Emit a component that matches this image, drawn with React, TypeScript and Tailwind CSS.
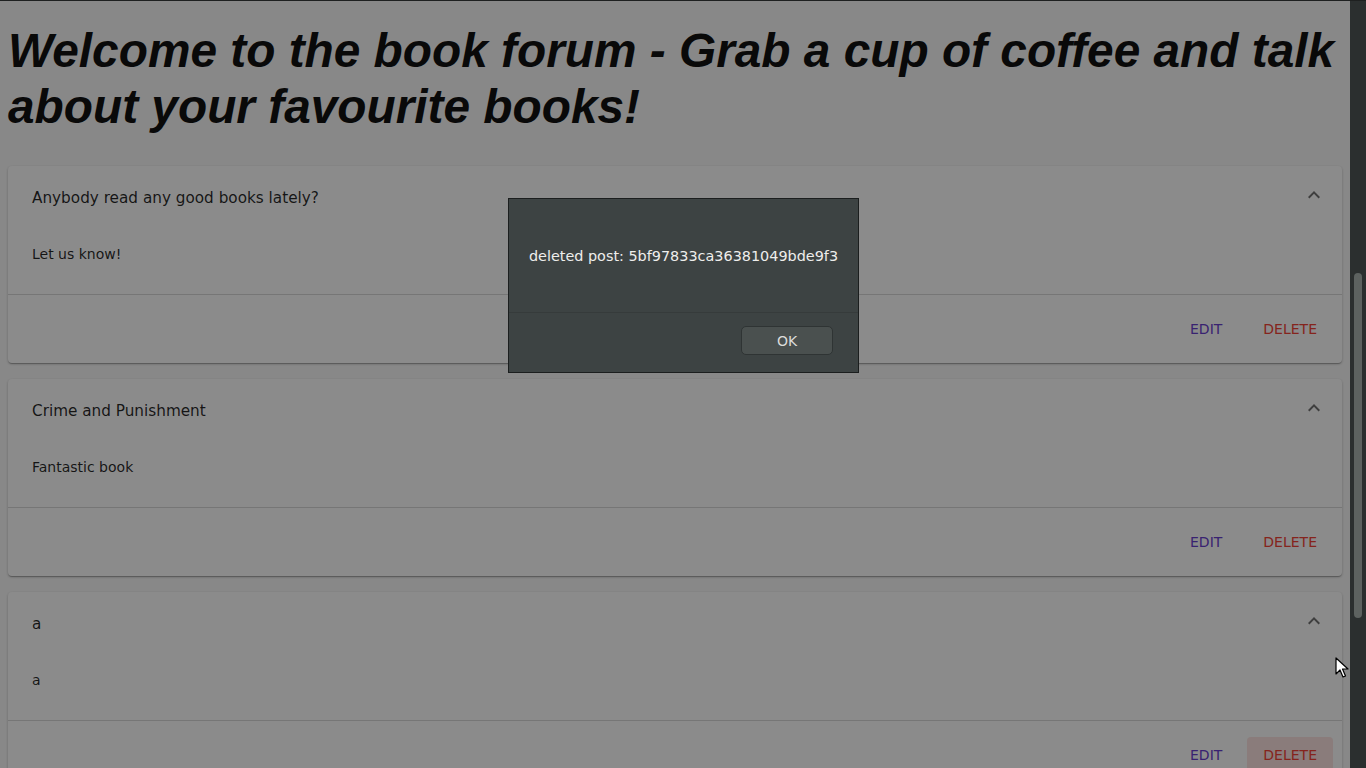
import React from "react";

type Post = {
  id: string;
  title: string;
  body: string;
  hoverDelete?: boolean;
};

const posts: Post[] = [
  { id: "1", title: "Anybody read any good books lately?", body: "Let us know!" },
  { id: "2", title: "Crime and Punishment", body: "Fantastic book" },
  { id: "3", title: "a", body: "a", hoverDelete: true },
];

function ChevronUp() {
  return (
    <svg viewBox="0 0 24 24" className="h-6 w-6 fill-black/55" aria-hidden="true">
      <path d="M7.41 15.41L12 10.83l4.59 4.58L18 14l-6-6-6 6z" />
    </svg>
  );
}

function PostCard({ post }: { post: Post }) {
  return (
    <div className="rounded bg-white shadow-[0_1px_3px_rgba(0,0,0,0.2),0_1px_1px_rgba(0,0,0,0.14),0_2px_1px_-1px_rgba(0,0,0,0.12)]">
      <div className="flex h-16 items-center pl-6 pr-4">
        <p className="flex-1 text-[15.25px] text-black/85">{post.title}</p>
        <div className="-mt-[7px]">
          <ChevronUp />
        </div>
      </div>
      <div className="px-6 pt-[14px] pb-[30px] text-sm leading-5 text-black/85">{post.body}</div>
      <div className="h-px bg-black/15" />
      <div className="flex justify-end gap-[9px] py-4 pl-4 pr-[9px]">
        <button className="h-9 min-w-16 rounded px-4 text-sm text-[#6a3fd0]">EDIT</button>
        <button
          className={
            post.hoverDelete
              ? "h-9 rounded bg-[#f44336]/15 px-4 text-sm text-[#f44336]"
              : "h-9 rounded px-4 text-sm text-[#f44336]"
          }
        >
          DELETE
        </button>
      </div>
    </div>
  );
}

function Cursor() {
  return (
    <svg width="14" height="22" viewBox="0 0 14 22" className="absolute left-[1335px] top-[657px]">
      <path d="M1 1 L1 17 L5 13 L8 20 L10.5 19 L7.5 12 L13 12 Z" fill="#fff" stroke="#000" strokeWidth="1.2" strokeLinejoin="round" />
    </svg>
  );
}

export default function App() {
  return (
    <div className="relative flex h-screen flex-col overflow-hidden font-['DejaVu_Sans',sans-serif]">
      <div className="h-px bg-[#1e2020]" />
      <div className="flex min-h-0 flex-1">
        <div className="relative flex-1 overflow-hidden bg-[#fafafa] px-2">
          <h1 className="mt-[22px] mb-[31px] font-['Liberation_Sans',Arial,sans-serif] text-[47.8px] leading-[56px] font-bold italic text-[#111]">
            Welcome to the book forum - Grab a cup of coffee and talk about your favourite books!
          </h1>
          <div className="flex flex-col gap-4">
            {posts.map((p) => (
              <PostCard key={p.id} post={p} />
            ))}
          </div>
          <div className="absolute inset-0 bg-black/[0.455]" />
        </div>
        <div className="w-4 bg-[#2b2f2f] pt-[272px] pl-1">
          <div className="h-[345px] w-2 rounded-full bg-[#5d6260]" />
        </div>
      </div>

      <div className="absolute left-[508px] top-[198px] flex w-[351px] flex-col border border-[#1b1e1e] bg-[#3d4343]">
        <div className="flex h-[113px] items-center justify-center pt-[3px] text-[14.4px] text-[#eeeeec]">
          deleted post: 5bf97833ca36381049bde9f3
        </div>
        <div className="h-px bg-[#363b3b]" />
        <div className="flex justify-end pt-[13px] pr-[25px] pb-[17px]">
          <button className="h-[29px] w-[92px] rounded-[5px] border border-[#2f3434] bg-[#4a504f] text-sm text-[#dcdcda]">
            OK
          </button>
        </div>
      </div>

      <Cursor />
    </div>
  );
}
